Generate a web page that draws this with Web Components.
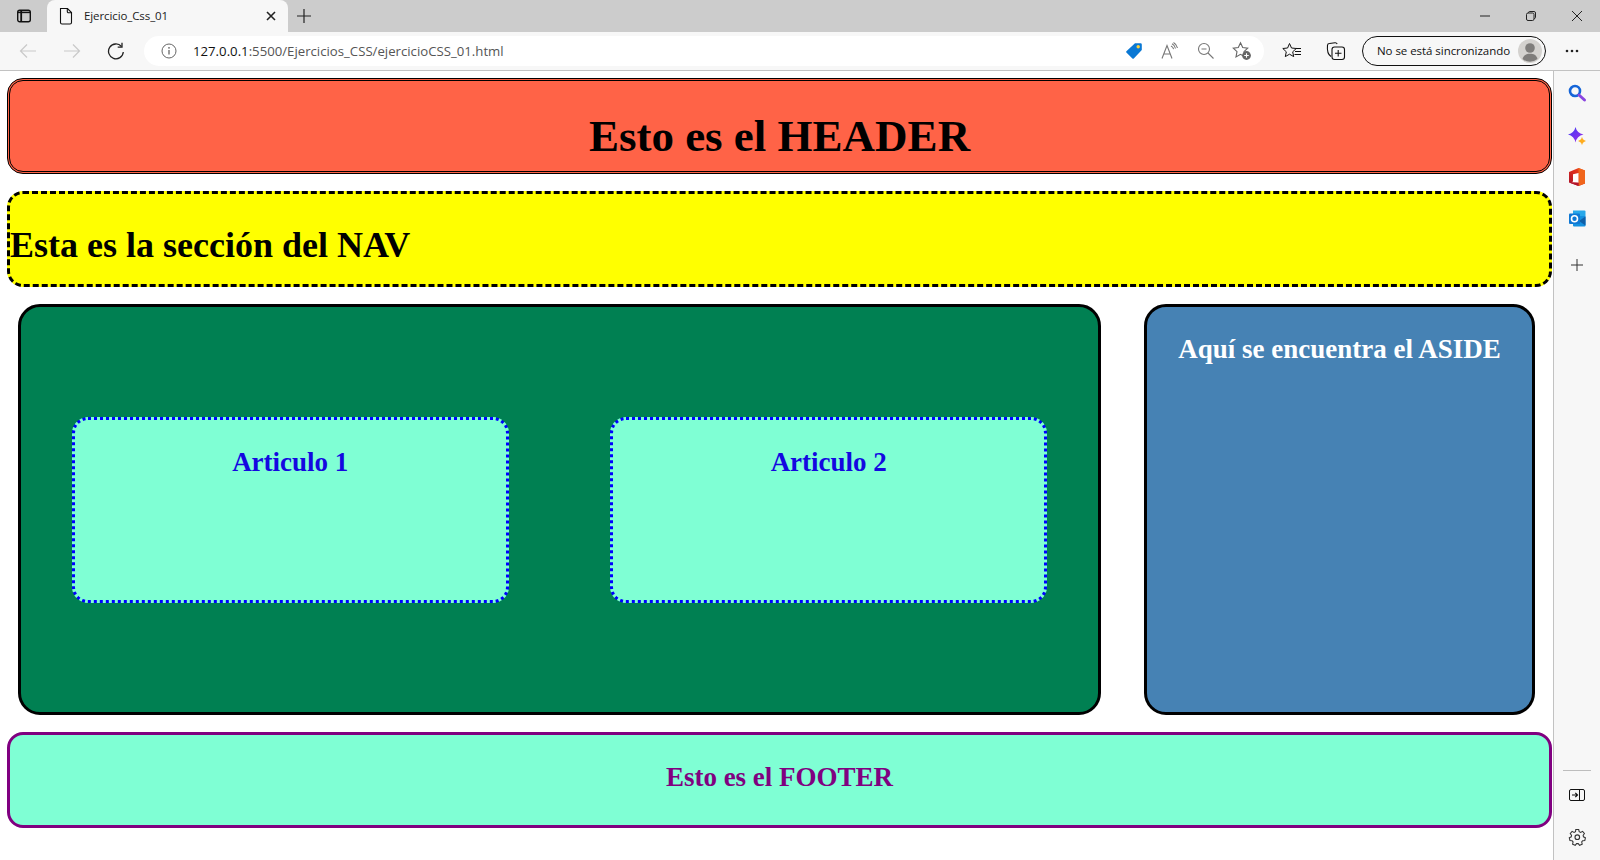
<!DOCTYPE html>
<html lang="es">
<head>
<meta charset="utf-8">
<title>Ejercicio_Css_01</title>
<style>
html,body{margin:0;padding:0;height:100%;overflow:hidden;background:#fff}
</style>
</head>
<body>
<browser-window>
  <tab-strip slot="strip"></tab-strip>
  <nav-toolbar slot="toolbar"></nav-toolbar>
  <demo-page slot="page">
    <demo-panel kind="header" level="1">Esto es el HEADER</demo-panel>
    <demo-panel kind="nav" level="2">Esta es la sección del NAV</demo-panel>
    <demo-row>
      <demo-section>
        <demo-panel kind="article" level="3">Articulo 1</demo-panel>
        <demo-panel kind="article" level="3">Articulo 2</demo-panel>
      </demo-section>
      <demo-panel kind="aside" level="3">Aquí se encuentra el ASIDE</demo-panel>
    </demo-row>
    <demo-panel kind="footer" level="3">Esto es el FOOTER</demo-panel>
  </demo-page>
  <side-bar slot="side"></side-bar>
</browser-window>

<script>
function define(name, html) {
  customElements.define(name, class extends HTMLElement {
    constructor() {
      super();
      this.attachShadow({mode: 'open'}).innerHTML = html;
    }
  });
}
const UI = '"Open Sans","Noto Sans",sans-serif';

define('browser-window', `
<style>
:host{display:grid;width:1600px;height:860px;grid-template-columns:1553px 47px;grid-template-rows:32px 39px 789px;background:#fff;overflow:hidden}
.a{grid-column:1/3;grid-row:1}.b{grid-column:1/3;grid-row:2}.c{grid-column:1;grid-row:3;display:block;min-width:0}.d{grid-column:2;grid-row:3;display:block}
</style>
<div class="a"><slot name="strip"></slot></div>
<div class="b"><slot name="toolbar"></slot></div>
<div class="c"><slot name="page"></slot></div>
<div class="d"><slot name="side"></slot></div>`);

define('tab-strip', `
<style>
:host{display:flex;align-items:center;height:32px;background:#ccc;font:12px ${UI};color:#1c1c1c}
.ic{display:flex;align-items:center;justify-content:center;flex:none}
.tab{display:flex;align-items:center;box-sizing:border-box;width:241px;height:32px;background:#f7f7f7;border-radius:8px 8px 0 0;padding:0 11px 0 11px;flex:none}
.title{flex:1;margin-left:10px;font-size:11.5px;letter-spacing:-.1px;white-space:nowrap;transform:translateY(-1.5px)}
.fill{flex:1}
.win{width:46px;height:32px}
</style>
<div class="ic" style="width:47px"><svg width="16" height="16" viewBox="0 0 16 16" fill="none" stroke="#111" stroke-width="1.4"><rect x="1.700" y="2.200" width="12.600" height="11.600" rx="2"/><path d="M5.200 2.500v11" stroke-width="1.800"/><path d="M2 4.400h12" stroke-width="1.500"/></svg></div>
<div class="tab">
  <svg width="16" height="18" viewBox="0 0 16 18" fill="none" stroke="#111" stroke-width="1.100"><path d="M2.500 1.500h7l4 4v10a1.500 1.500 0 0 1-1.500 1.500H4a1.500 1.500 0 0 1-1.500-1.500z"/><path d="M9.300 1.500v3a1.200 1.200 0 0 0 1.200 1.200h3"/></svg>
  <span class="title">Ejercicio_Css_01</span>
  <svg width="12" height="12" viewBox="0 0 12 12" stroke="#222" stroke-width="1.600"><path d="M2 2l8 8M10 2l-8 8"/></svg>
</div>
<div class="ic" style="width:32px"><svg width="16" height="16" viewBox="0 0 16 16" stroke="#222" stroke-width="1.200"><path d="M8 1v14M1 8h14"/></svg></div>
<div class="fill"></div>
<div class="ic win"><svg width="12" height="12" viewBox="0 0 12 12" stroke="#222" stroke-width="1"><path d="M1 6h10"/></svg></div>
<div class="ic win"><svg width="12" height="12" viewBox="0 0 12 12" fill="none" stroke="#222" stroke-width="1"><rect x="1.500" y="3" width="7.500" height="7.500" rx="1.500"/><path d="M3.500 3V2.600A1.200 1.200 0 0 1 4.700 1.500h4.400A1.500 1.500 0 0 1 10.500 3v4.400A1.200 1.200 0 0 1 9.300 8.500H9"/></svg></div>
<div class="ic win"><svg width="12" height="12" viewBox="0 0 12 12" stroke="#222" stroke-width="1"><path d="M1 1l10 10M11 1L1 11"/></svg></div>`);

define('nav-toolbar', `
<style>
:host{display:flex;align-items:center;box-sizing:border-box;height:39px;background:#f7f7f7;border-bottom:1px solid #c2c2c2;padding:0 0 0 6px;font:12px ${UI}}
.ic{display:flex;align-items:center;justify-content:center;flex:none;width:44px;height:32px}
.bar{display:flex;align-items:center;box-sizing:border-box;width:1120px;height:30px;margin-left:6px;margin-right:6px;background:#fff;border-radius:15px;padding:0 4px 0 17px;flex:none}
.url{flex:1;font-size:13.200px;color:#555;margin-left:16px;white-space:nowrap}
.url b{font-weight:400;color:#111}
.bi{display:flex;width:36px;justify-content:center;flex:none}
.pill{display:flex;align-items:center;justify-content:space-between;box-sizing:border-box;width:184px;height:30px;margin-left:4px;border:1px solid #111;border-radius:15px;padding:0 3px 0 14px;font-size:11.500px;letter-spacing:-.05px;color:#111;flex:none;white-space:nowrap}
.pill span{transform:translateY(-1px)}
.more{width:52px}
</style>
<div class="ic"><svg width="18" height="18" viewBox="0 0 18 18" fill="none" stroke="#c9c9c9" stroke-width="1.200"><path d="M17 9H1.500M8 2.500L1.500 9 8 15.500"/></svg></div>
<div class="ic"><svg width="18" height="18" viewBox="0 0 18 18" fill="none" stroke="#c9c9c9" stroke-width="1.200"><path d="M1 9h15.500M10 2.500L16.500 9 10 15.500"/></svg></div>
<div class="ic"><svg width="18" height="18" viewBox="0 0 18 18" fill="none" stroke="#222" stroke-width="1.300"><path d="M14.500 4.500A7.400 7.400 0 1 0 16.300 10"/><path d="M15 .8v4.300h-4.300"/></svg></div>
<div class="bar">
  <svg width="16" height="16" viewBox="0 0 16 16" fill="none" stroke="#666" stroke-width="1"><circle cx="8" cy="8" r="7"/><path d="M8 7v4.600" stroke-width="1.300"/><circle cx="8" cy="4.800" r=".9" fill="#666" stroke="none"/></svg>
  <span class="url"><b>127.0.0.1</b>:5500/Ejercicios_CSS/ejercicioCSS_01.html</span>
  <span class="bi"><svg width="18" height="18" viewBox="0 0 18 18"><path d="M10 1.200h5.600a1.200 1.200 0 0 1 1.200 1.200V8L8.800 16.400a1 1 0 0 1-1.400 0L1.400 10.600a1 1 0 0 1 0-1.400z" fill="#0a78d4"/><circle cx="13.200" cy="4.700" r="1.700" fill="#ffd23c"/></svg></span>
  <span class="bi"><svg width="18" height="18" viewBox="0 0 18 18" fill="none" stroke="#777" stroke-width="1.100"><path d="M1 16.500L6 3.500l5 13M2.800 12h6.400"/><path d="M10 4a4.500 4.500 0 0 1 2.600 3.200M11 1.800a6.500 6.500 0 0 1 3.500 4.700M12.500 .5a8.500 8.500 0 0 1 4 5.500"/></svg></span>
  <span class="bi"><svg width="18" height="18" viewBox="0 0 18 18" fill="none" stroke="#777" stroke-width="1.100"><circle cx="7" cy="7" r="5.500"/><path d="M11 11l5.500 5.500M4.500 7h5"/></svg></span>
  <span class="bi"><svg width="20" height="20" viewBox="0 0 20 20"><path d="M8.500 1.800l2.200 4.800 5 .6-3.700 3.500 1 5.200-4.500-2.600-4.500 2.600 1-5.200L1.300 7.200l5-.6z" fill="none" stroke="#666" stroke-width="1.100"/><circle cx="14.500" cy="14.500" r="4.400" fill="#666"/><path d="M14.500 12.200v4.600M12.200 14.500h4.600" stroke="#fff" stroke-width="1.100"/></svg></span>
</div>
<div class="ic"><svg width="20" height="18" viewBox="0 0 20 18" fill="none" stroke="#111" stroke-width="1"><path d="M7.500 1.500l2 4.500 4.800.5-3.600 3.300 1 4.800-4.200-2.400-4.200 2.400 1-4.800L.8 6.500l4.800-.5z"/><path d="M14 6.500h5M13 9.500h6M12.500 12.500h6.500"/></svg></div>
<div class="ic"><svg width="20" height="20" viewBox="0 0 20 20" fill="none" stroke="#111" stroke-width="1.100"><path d="M5 15.500C2 13.500 1 9 1.500 4.200 1.600 3 2.500 2.500 3.500 2.500l5.500-.8c1-.1 1.800.4 2.200 1.300"/><rect x="6" y="6" width="12.500" height="12.500" rx="2.500"/><path d="M12.200 9v6.500M9 12.200h6.500"/></svg></div>
<div class="pill"><span>No se está sincronizando</span><svg width="24" height="24" viewBox="0 0 24 24"><circle cx="12" cy="12" r="12" fill="#d4d2cf"/><circle cx="12" cy="9" r="4.800" fill="#7f7d7b"/><path d="M4.500 20c1-4 4-5.200 7.500-5.200s6.500 1.200 7.500 5.200a12 12 0 0 1-15 0z" fill="#7f7d7b"/></svg></div>
<div class="ic more"><svg width="16" height="4" viewBox="0 0 16 4" fill="#222"><circle cx="3" cy="2" r="1.300"/><circle cx="8" cy="2" r="1.300"/><circle cx="13" cy="2" r="1.300"/></svg></div>`);

define('side-bar', `
<style>
:host{display:flex;flex-direction:column;align-items:center;box-sizing:border-box;width:47px;height:789px;background:#f7f7f7;border-left:1px solid #c2c2c2;padding-top:1px}
.ic{display:flex;align-items:center;justify-content:center;width:46px;height:42.500px;flex:none}
svg{overflow:visible}
.fill{flex:1}
hr{width:28px;border:0;border-top:1px solid #bdbdbd;margin:0 0 3px}
</style>
<div class="ic"><svg width="18" height="18" viewBox="0 0 18 18" fill="none"><circle cx="7" cy="7" r="5" stroke="#1565d8" stroke-width="2.600"/><path d="M11 11l5.500 5" stroke="#8a45e0" stroke-width="3" stroke-linecap="round"/></svg></div>
<div class="ic"><svg width="18" height="18" viewBox="0 0 18 18"><defs><linearGradient id="sp" x1="0" y1="0" x2="1" y2="1"><stop offset="0" stop-color="#3a3cf5"/><stop offset="1" stop-color="#a52ce8"/></linearGradient></defs><path d="M7.500 0Q8.800 6 15.500 7.500 8.800 9 7.500 15.500 6.200 9 0 7.500 6.200 6 7.500 0z" fill="url(#sp)"/><path d="M14 9.800Q14.600 13 18 14 14.600 15 14 18.200 13.400 15 10 14 13.400 13 14 9.800z" fill="#ffad1f"/></svg></div>
<div class="ic" style="margin-top:-1px"><svg width="16" height="18" viewBox="0 0 16 18"><defs><linearGradient id="of" x1="0" y1="1" x2="1" y2="0"><stop offset="0" stop-color="#a80f2a"/><stop offset=".6" stop-color="#e0301e"/><stop offset="1" stop-color="#f4601a"/></linearGradient></defs><path d="M9.500 0L16 2.500v13L9.500 18 0 14.500V4z" fill="url(#of)"/><path d="M9.500 0L16 2.500v13L9.500 18z" fill="#f0651c"/><path d="M4 6.200L9.500 5v9.800L2.500 14.200 4 13.600z" fill="#fff"/><path d="M0 14.500L9.500 14.800V18z" fill="#b3152b"/></svg></div>
<div class="ic" style="margin-top:-1px"><svg width="17" height="17" viewBox="0 0 17 17"><path d="M4 .5h11.500a1 1 0 0 1 1 1V6H4z" fill="#28a8ea"/><path d="M4 6h12.500v9.500a1 1 0 0 1-1 1H5a1 1 0 0 1-1-1z" fill="#1490df"/><path d="M10 11l6.500-4.500v9z" fill="#0f5fa8"/><rect x="0" y="3.500" width="11" height="10.500" rx="1" fill="#0f78d4"/><circle cx="5.500" cy="8.700" r="3" fill="none" stroke="#fff" stroke-width="1.600"/></svg></div>
<div class="ic" style="margin-top:3.500px"><svg width="14" height="14" viewBox="0 0 14 14" stroke="#333" stroke-width="1"><path d="M7 1v12M1 7h12"/></svg></div>
<div class="fill"></div>
<hr>
<div class="ic"><svg width="16" height="12" viewBox="0 0 16 12" fill="none" stroke="#111" stroke-width="1"><rect x=".5" y=".5" width="15" height="11" rx="1.500"/><path d="M10.500 .5v11"/><path d="M3 6h5.500M6.300 3.800L8.500 6 6.300 8.200" stroke-width="1.200"/></svg></div>
<div class="ic" style="margin-bottom:1px"><svg width="17" height="17" viewBox="0 0 17 17" fill="none" stroke="#333" stroke-width="1.100"><path d="M7 1h3l.5 2.200 1.500.7 2-1.100 1.900 2.200-1.300 1.900.3 1.600 2 .9-.6 2.900-2.200.2-1 1.300.5 2.200-2.700 1.200-1.400-1.700h-1.700l-1.400 1.700-2.700-1.200.5-2.200-1-1.300-2.200-.2L.3 9.400l2-.9.3-1.600-1.300-1.900 1.900-2.200 2 1.100 1.500-.7z" transform="translate(0 -.4) scale(.97)"/><circle cx="8.300" cy="8.200" r="2.300"/></svg></div>`);

define('demo-page', `
<style>
:host{display:flex;flex-direction:column;box-sizing:border-box;height:789px;padding:7px 1px 0 7px;gap:17px;background:#fff;overflow:hidden}
</style><slot></slot>`);

define('demo-row', `
<style>
:host{display:grid;grid-template-columns:1083px 391px;column-gap:43px;padding:0 17px 0 11px;height:411px}
</style><slot></slot>`);

define('demo-section', `
<style>
:host{display:flex;justify-content:space-around;align-items:center;box-sizing:border-box;height:411px;background:#008052;border:3px solid #000;border-radius:22px}
</style><slot></slot>`);

const kinds = {
  header:  'height:96px;background:#ff6347;border:3px double #000;border-radius:16px;text-align:center;color:#000;',
  nav:     'height:96px;background:#ff0;border:3px dashed #000;border-radius:16px;text-align:left;color:#000;',
  article: 'width:437px;height:186px;background:#7fffd4;border:3px dotted #00f;border-radius:16px;text-align:center;color:#1408e0;',
  aside:   'height:411px;background:#4682b4;border:3px solid #000;border-radius:22px;text-align:center;color:#fff;',
  footer:  'height:96px;background:#7fffd4;border:3px solid #800080;border-radius:16px;text-align:center;color:#800080;'
};
const sizes = {1:45,2:36,3:27};
const tops = {header:30, nav:31, article:27, aside:27, footer:27};
customElements.define('demo-panel', class extends HTMLElement {
  constructor() {
    super();
    const k = this.getAttribute('kind'), l = +this.getAttribute('level');
    this.attachShadow({mode:'open'}).innerHTML = `
<style>
:host{display:block;box-sizing:border-box;${kinds[k]}flex:none;font-family:"Liberation Serif","Times New Roman",serif;font-weight:700}
.t{font-size:${sizes[l]}px;line-height:1.15;padding-top:${tops[k]}px}
</style>
<div class="t" role="heading" aria-level="${l}"><slot></slot></div>`;
  }
});
</script>
</body>
</html>
